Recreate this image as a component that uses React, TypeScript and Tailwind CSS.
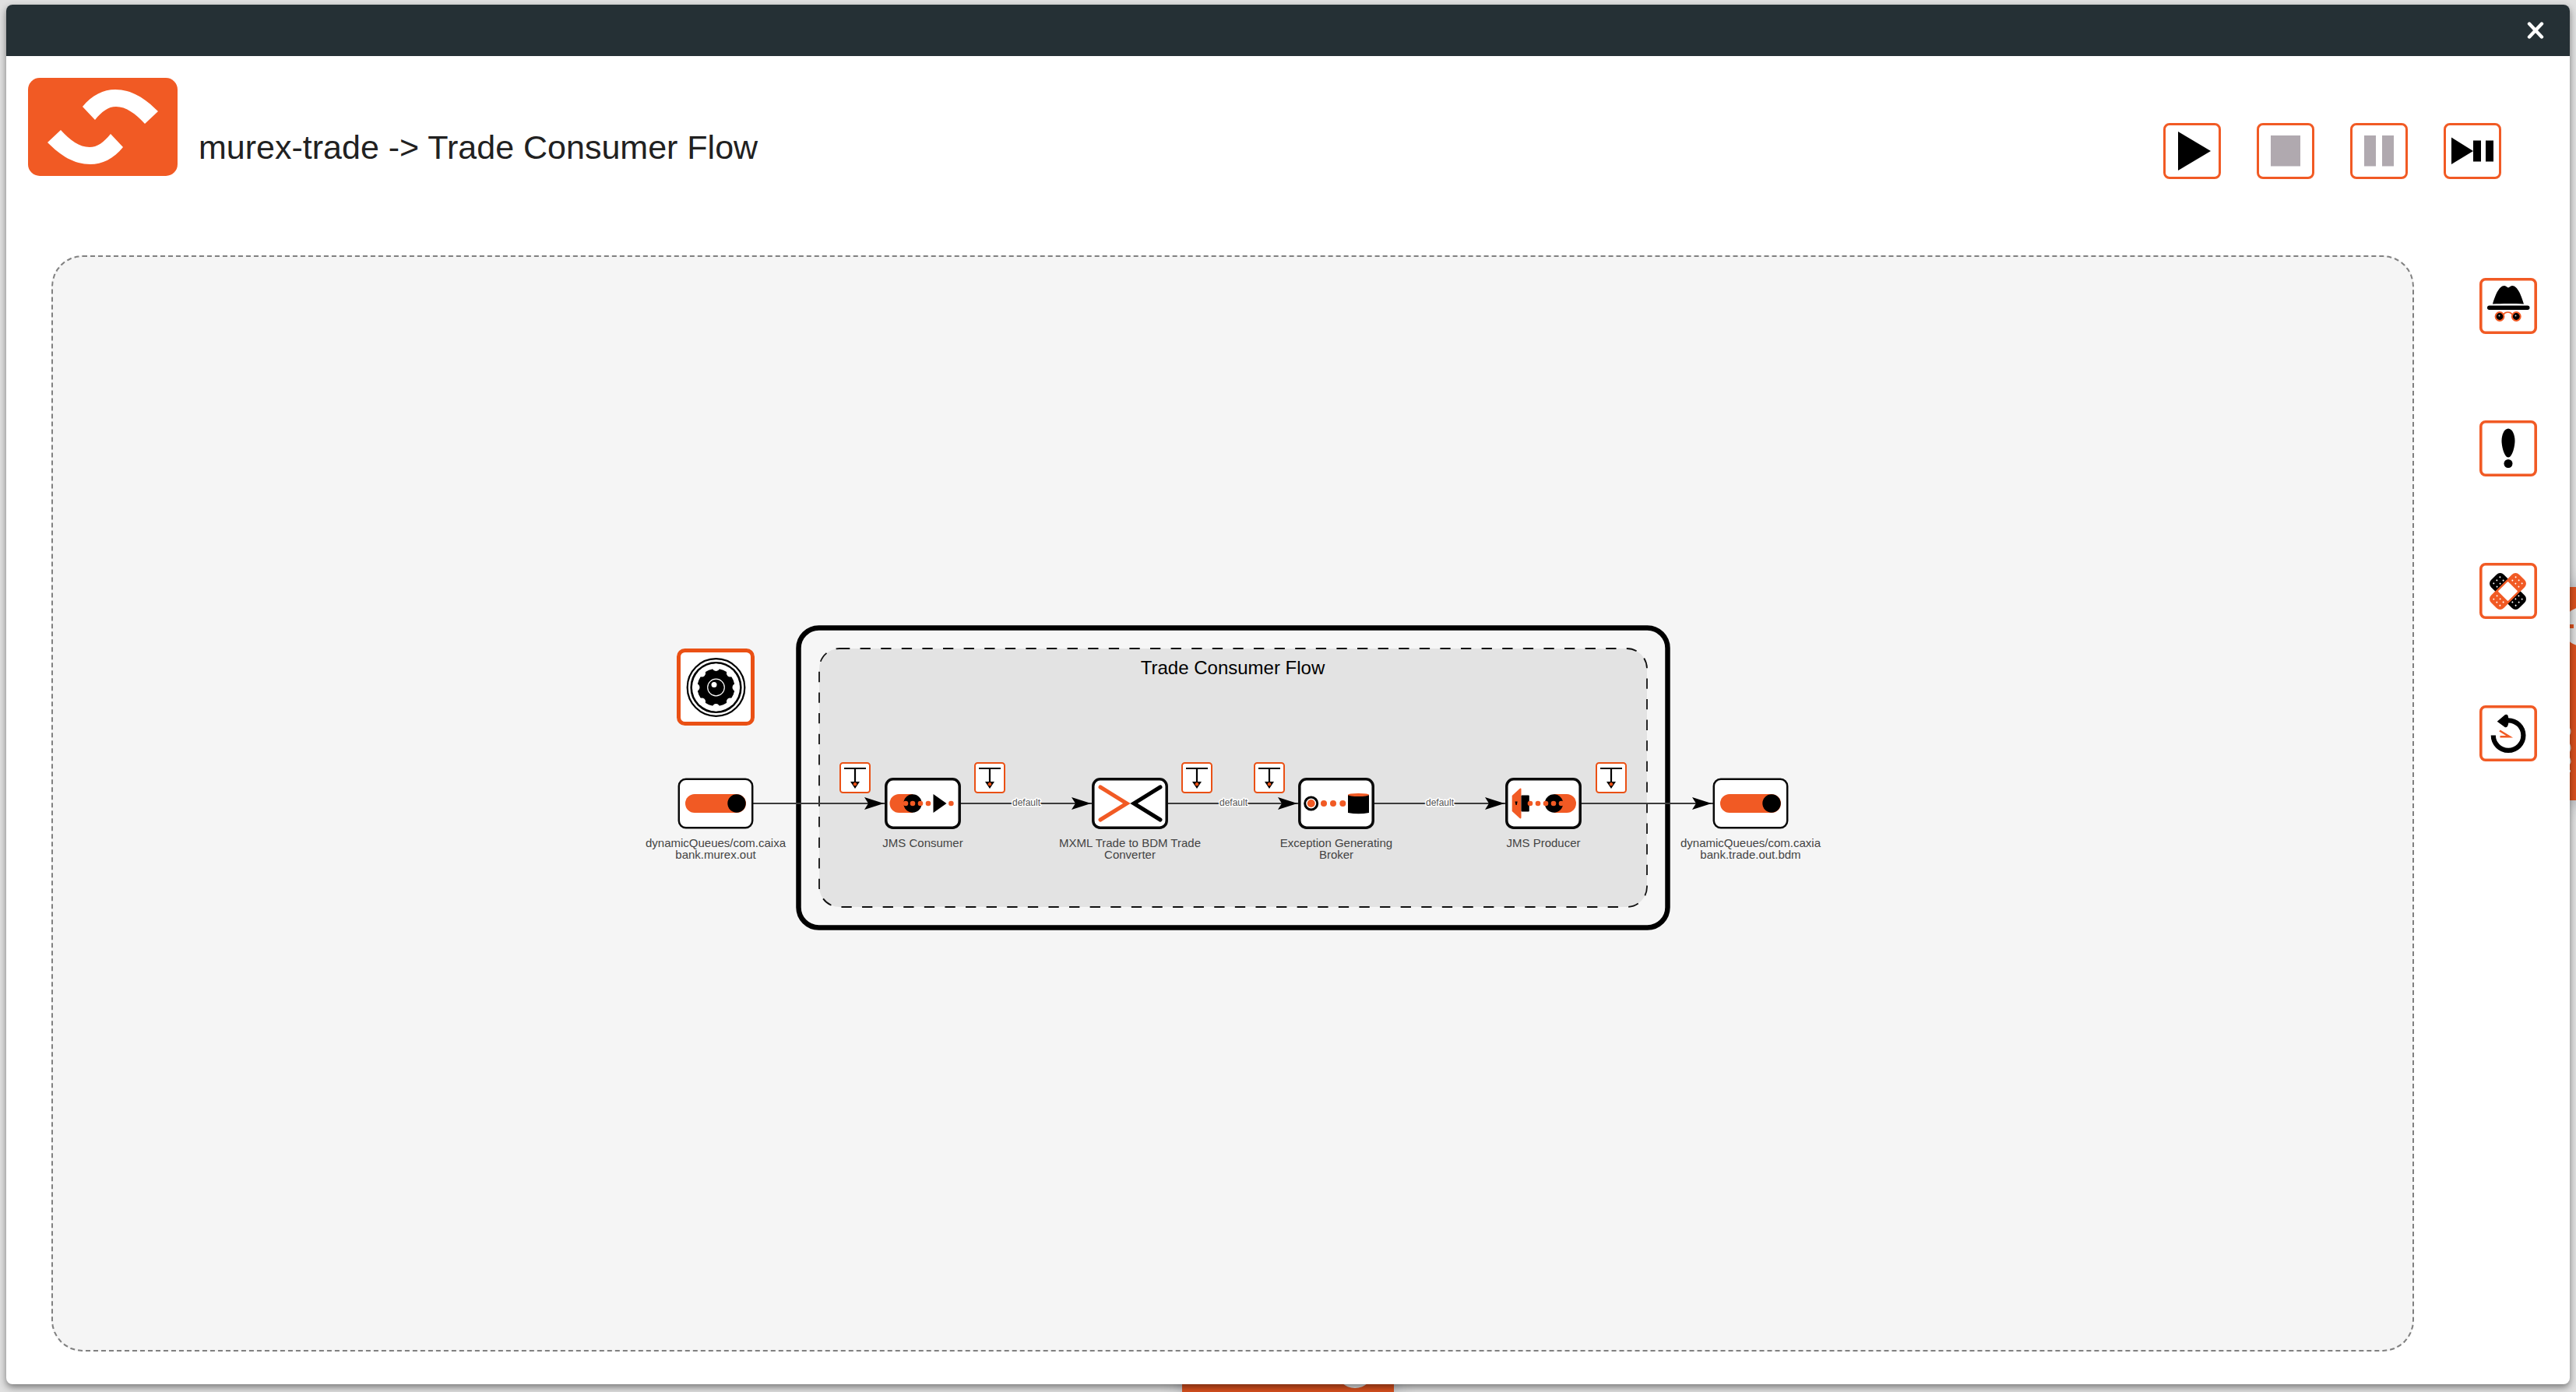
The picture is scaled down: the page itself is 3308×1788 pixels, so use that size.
import React from "react";

const ORANGE = "#f15a24";
const DEEP = "#ea5014";

function Logo() {
  return (
    <svg viewBox="0 0 192 126" className="h-[126px] w-48 shrink-0" role="img" aria-label="Logo">
      <rect width="192" height="126" rx="15" fill={ORANGE} />
      <path
        fill="#fff"
        d="M70 37C82 22 97 15 112 15C133 15 150 26 167 43L150 59C138 46 126 37 113 37C103 37 95 43 86 54Z"
      />
      <path
        fill="#fff"
        transform="rotate(180 96 63)"
        d="M70 37C82 22 97 15 112 15C133 15 150 26 167 43L150 59C138 46 126 37 113 37C103 37 95 43 86 54Z"
      />
    </svg>
  );
}

type IconButtonProps = { label: string; disabled?: boolean; children: React.ReactNode };

function ControlButton({ label, disabled, children }: IconButtonProps) {
  return (
    <button type="button" aria-label={label} disabled={disabled} className="h-[72px] w-[74px]">
      <svg viewBox="0 0 74 72" className="h-full w-full">
        <rect x="1.5" y="1.5" width="71" height="69" rx="6.5" fill="#fff" stroke={ORANGE} strokeWidth="3" />
        {children}
      </svg>
    </button>
  );
}

function ToolButton({ label, children }: IconButtonProps) {
  return (
    <button type="button" aria-label={label} className="h-[72px] w-[74px]">
      <svg viewBox="0 0 74 72" className="h-full w-full">
        <rect x="1.8" y="1.8" width="70.4" height="68.4" rx="6" fill="#fff" stroke={ORANGE} strokeWidth="3.6" />
        {children}
      </svg>
    </button>
  );
}

const bandDots = [14, 20].flatMap((u) => [-5.7, 0, 5.7].flatMap((v) => [[u, v], [-u, v]]));

function Strip({ angle, fill }: { angle: number; fill: string }) {
  return (
    <g transform={`translate(36.5 36.5) rotate(${angle})`}>
      <rect x="-25.5" y="-11.5" width="51" height="23" rx="6.5" fill={fill} />
      {bandDots.map(([x, y], i) => (
        <circle key={i} cx={x} cy={y} r="1" fill="#fff" />
      ))}
    </g>
  );
}

function SideTools() {
  return (
    <aside className="flex flex-col gap-[111px] pt-[29px]">
      <ToolButton label="Wiretap">
        <path d="M17 33.500C20 23 25 10 32 10C34.500 10 35.500 12.500 37 12.500C38.500 12.500 39.500 10 42 10C49 10 54 23 57 33.500C45 32.700 29 32.700 17 33.500Z" />
        <rect x="10" y="35.500" width="54.500" height="5.500" rx="2.700" />
        <path d="M31 47C33 43 40 43 42 47" fill="none" stroke={ORANGE} strokeWidth="1.600" />
        <circle cx="26" cy="49.500" r="5.400" stroke={ORANGE} strokeWidth="2" />
        <circle cx="47.300" cy="49.500" r="5.400" stroke={ORANGE} strokeWidth="2" />
        <circle cx="25.500" cy="48.500" r="1" fill="#ccc" />
        <circle cx="46.500" cy="48.500" r="1" fill="#ccc" />
      </ToolButton>
      <ToolButton label="Exclusions">
        <path d="M37 10.500C42.500 10.500 45.500 19 45.500 26C45.500 34 42 47.500 37 47.500C32 47.500 28.500 34 28.500 26C28.500 19 31.500 10.500 37 10.500Z" />
        <circle cx="37" cy="55.500" r="5.500" />
      </ToolButton>
      <ToolButton label="Hospital">
        <Strip angle={45} fill="#000" />
        <Strip angle={-45} fill={ORANGE} />
        <rect x="-9" y="-9" width="18" height="18" rx="1" fill="#fff" transform="translate(36.500 36.500) rotate(45)" />
      </ToolButton>
      <ToolButton label="Replay">
        <path d="M17.800 38.500A19.300 19.300 0 1 0 37 19.300" fill="none" stroke="#000" strokeWidth="6.200" />
        <path d="M22.700 20.700L33 12Q36.500 10.500 37 15Q38.500 20 37 24Q36 29 33 28.200Z" />
        <path d="M26 32.500L38.500 40.200H26.500" fill="none" stroke={ORANGE} strokeWidth="2.600" />
      </ToolButton>
    </aside>
  );
}

const QueueGlyph = (
  <>
    <rect x="10" y="21" width="78" height="24" rx="12" fill={ORANGE} />
    <circle cx="76" cy="33" r="11.700" />
  </>
);

const ConsumerGlyph = (
  <>
    <path d="M36 21H18.500A12 12 0 0 0 18.500 45H36Z" fill={ORANGE} />
    <circle cx="36" cy="33" r="11.700" />
    <path d="M62.500 21L79.500 33L62.500 45Z" />
    {[27, 36, 46, 56, 85.4].map((x) => (
      <circle key={x} cx={x} cy="33" r="3.300" fill={ORANGE} />
    ))}
  </>
);

const ConverterGlyph = (
  <g fill="none" strokeLinecap="round" strokeWidth="5">
    <path d="M11 12L45 33L11 54" stroke={ORANGE} />
    <path d="M88 12L54 33L88 54" stroke="#000" />
  </g>
);

const BrokerGlyph = (
  <>
    <circle cx="16.700" cy="33" r="8" fill="#fff" stroke="#000" strokeWidth="3" />
    {[16.7, 33, 45, 57.3].map((x, i) => (
      <circle key={x} cx={x} cy="33" r={i ? 4 : 5} fill={ORANGE} />
    ))}
    <path d="M64 22V45Q77.500 47.500 91 45V22Z" />
    <ellipse cx="77.500" cy="22" rx="13.500" ry="2" fill={ORANGE} />
  </>
);

const ProducerGlyph = (
  <>
    <path d="M8.700 23L18 14.500Q20.500 12.500 20.500 15V51Q20.500 53.500 18 51.500L8.700 43Z" fill={ORANGE} />
    <path d="M12.500 30.500H15.700L14.800 35H13.500Z" />
    <rect x="20.500" y="22.500" width="10.300" height="21" rx="1" />
    <path d="M62.500 21H79A12 12 0 0 1 79 45H62.500Z" fill={ORANGE} />
    <circle cx="62.500" cy="33" r="11.700" />
    {[32, 42, 52, 62, 72].map((x) => (
      <circle key={x} cx={x} cy="33" r="3.300" fill={ORANGE} />
    ))}
  </>
);

const nodes = [
  { x: 96, label: "dynamicQueues/com.caixa\nbank.murex.out", glyph: QueueGlyph, stroke: 2.5 },
  { x: 362, label: "JMS Consumer", glyph: ConsumerGlyph, stroke: 3.5 },
  { x: 628, label: "MXML Trade to BDM Trade\nConverter", glyph: ConverterGlyph, stroke: 3.5 },
  { x: 893, label: "Exception Generating\nBroker", glyph: BrokerGlyph, stroke: 3.5 },
  { x: 1159, label: "JMS Producer", glyph: ProducerGlyph, stroke: 3.5 },
  { x: 1425, label: "dynamicQueues/com.caxia\nbank.trade.out.bdm", glyph: QueueGlyph, stroke: 2.5 },
];

const taps = [275, 448, 714, 807, 1246];

function FlowNode({ node }: { node: (typeof nodes)[number] }) {
  return (
    <figure className="absolute top-[196px] flex w-[200px] flex-col items-center" style={{ left: node.x - 100 }}>
      <svg viewBox="0 0 98 66" className="h-[66px] w-[98px]">
        <rect x="1.800" y="1.800" width="94.400" height="62.400" rx="9" fill="#fff" stroke="#0a0a0a" strokeWidth={node.stroke} />
        {node.glyph}
      </svg>
      <figcaption className="mt-2.5 text-center text-[15px] leading-[15px] whitespace-pre text-[#444]">
        {node.label}
      </figcaption>
    </figure>
  );
}

function Tap({ x }: { x: number }) {
  return (
    <button type="button" aria-label="Wiretap" className="absolute top-44 size-10" style={{ left: x - 20 }}>
      <svg viewBox="0 0 40 40" className="size-10">
        <rect x="1" y="1" width="38" height="38" rx="3.500" fill="#fff" stroke={DEEP} strokeWidth="2" />
        <path d="M6 8H34M20 8V26" stroke="#000" strokeWidth="2.200" />
        <path d="M14 25H26L20 34Z" />
        <circle cx="20" cy="28.300" r="2.200" fill={DEEP} />
      </svg>
    </button>
  );
}

function ComponentOptions() {
  return (
    <button type="button" aria-label="Component options" className="absolute top-[30px] left-[46px] size-[100px]">
      <svg viewBox="0 0 100 100" className="size-[100px]">
        <rect x="2.500" y="2.500" width="95" height="94" rx="8" fill="#fff" stroke={DEEP} strokeWidth="5" />
        <g transform="translate(50.500 50)">
          <circle r="36.800" fill="none" stroke="#000" strokeWidth="2.200" />
          <circle r="31.800" fill="none" stroke="#000" strokeWidth="2.600" />
          <circle r="24" />
          {[0, 45, 90, 135, 180, 225, 270, 315].map((a) => (
            <circle key={a} cy="-25.800" r="4.800" fill="#fff" transform={`rotate(${a})`} />
          ))}
          <circle r="10.800" fill="none" stroke="#fff" strokeWidth="1.200" />
          <circle cx="-2.500" cy="-3.500" r="3.500" fill="#fff" />
        </g>
      </svg>
    </button>
  );
}

function FlowDiagram() {
  return (
    <div className="relative h-[458px] w-[1520px] shrink-0">
      <svg viewBox="0 0 1520 458" className="absolute inset-0 h-full w-full">
        <rect x="202.500" y="3.500" width="1116" height="385" rx="26" fill="#f6f6f6" stroke="#000" strokeWidth="6.500" />
        <rect
          x="229"
          y="30"
          width="1063"
          height="332"
          rx="26"
          fill="#e3e3e3"
          stroke="#111"
          strokeWidth="1.800"
          strokeDasharray="13.300 13.300"
        />
        {nodes.slice(1).map((n, i) => (
          <g key={n.x}>
            <path d={`M${nodes[i].x + 48} 229H${n.x - 48}`} stroke="#3c3c3c" strokeWidth="1.800" />
            <path d={`M${n.x - 50} 229L${n.x - 75} 221L${n.x - 70} 229L${n.x - 75} 237Z`} fill="#000" />
          </g>
        ))}
        {[495, 761, 1026].map((x) => (
          <text
            key={x}
            x={x}
            y="232"
            textAnchor="middle"
            className="fill-[#555] stroke-white stroke-[3px] text-[12px] [paint-order:stroke] [stroke-linejoin:round]"
          >
            default
          </text>
        ))}
      </svg>
      <h2 className="absolute top-[43px] left-[460px] w-[600px] text-center text-2xl leading-6 text-black">
        Trade Consumer Flow
      </h2>
      <ComponentOptions />
      {taps.map((x) => (
        <Tap key={x} x={x} />
      ))}
      {nodes.map((n) => (
        <FlowNode key={n.x} node={n} />
      ))}
    </div>
  );
}

function Backdrop() {
  return (
    <div aria-hidden="true">
      <div className="absolute top-[754px] right-0 h-[274px] w-14 translate-x-12 bg-[#d9501e] shadow-[0_0_24px_rgba(60,70,90,0.5)]">
        <svg viewBox="0 0 56 274" className="h-full w-full" fill="#dcdcdc">
          <circle cx="16" cy="51" r="25" />
          <rect y="48" width="5" height="5" fill="#d9501e" />
          <path d="M0 181Q3 185 0 190ZM0 201Q3 207 0 212ZM0 219Q3 224 0 228ZM0 235H1V238H0Z" />
        </svg>
      </div>
      <div className="absolute bottom-0 left-[1518px] h-4 w-[272px] bg-[#d9501e] shadow-[0_0_24px_rgba(60,70,90,0.5)]">
        <svg viewBox="0 0 272 16" className="h-4 w-[272px]">
          <circle cx="222" cy="-13" r="24" fill="#e4e4e4" />
        </svg>
      </div>
    </div>
  );
}

export default function App() {
  return (
    <div className="relative flex h-screen flex-col overflow-hidden bg-[#e0e0e0] px-2 pt-1.5 pb-2.5 font-['Liberation_Sans',Arial,sans-serif]">
      <Backdrop />
      <main className="relative flex min-h-0 flex-1 flex-col rounded-lg bg-white shadow-[0_4px_10px_rgba(0,0,0,0.46)]">
        <header className="flex h-[66px] shrink-0 items-center justify-end rounded-t-lg bg-[#253035] pr-[33px]">
          <button type="button" aria-label="Close" className="size-[22px]">
            <svg viewBox="0 0 22 22" className="size-[22px]">
              <path d="M3 2.500L19 19.500M19 2.500L3 19.500" stroke="#fff" strokeWidth="4.400" strokeLinecap="round" />
            </svg>
          </button>
        </header>
        <div className="flex shrink-0 items-start pt-7 pr-[88px] pb-[98px] pl-7">
          <Logo />
          <h1 className="mt-[65px] ml-[27px] text-[43px] leading-[48px] text-[#212121]">
            murex-trade -&gt; Trade Consumer Flow
          </h1>
          <div className="mt-[58px] ml-auto flex gap-[46px]">
            <ControlButton label="Start">
              <path d="M19 11L61 36L19 61Z" />
            </ControlButton>
            <ControlButton label="Stop" disabled>
              <rect x="18" y="16" width="38" height="39.500" fill="#b0a9af" />
            </ControlButton>
            <ControlButton label="Pause" disabled>
              <path d="M18 16H33V55.500H18ZM41 16H56V55.500H41Z" fill="#b0a9af" />
            </ControlButton>
            <ControlButton label="Start paused">
              <path d="M10 18.500L38 36L10 53ZM38 22.500H48V49.500H38ZM54 22.500H64V49.500H54Z" />
            </ControlButton>
          </div>
        </div>
        <div className="flex min-h-0 flex-1 gap-[84px] pr-[42px] pb-[42px] pl-[58px]">
          <section className="flex min-w-0 flex-1 items-center justify-center overflow-hidden rounded-[40px] border-2 border-dashed border-[#808080] bg-[#f5f5f5]">
            <FlowDiagram />
          </section>
          <SideTools />
        </div>
      </main>
    </div>
  );
}
